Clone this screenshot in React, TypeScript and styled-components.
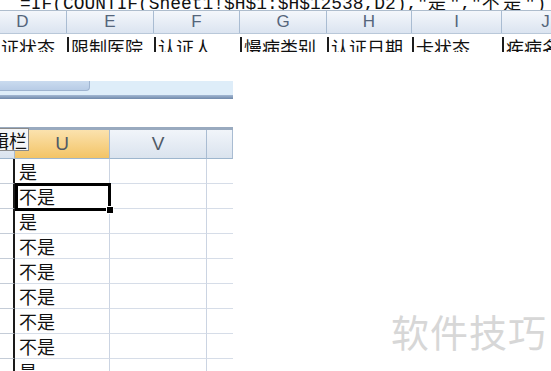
import React from "react";
import styled, { createGlobalStyle } from "styled-components";

const GlobalStyle = createGlobalStyle`
  html, body {
    margin: 0;
    padding: 0;
    background: #fff;
  }

  body {
    font-family: "Noto Sans CJK SC", "Liberation Sans", sans-serif;
  }
`;

// Top sheet: column widths from D to J (D starts off-screen)
const topColumns = [
  { letter: "D", label: "认证状态", width: 88 },
  { letter: "E", label: "限制医院", width: 87 },
  { letter: "F", label: "认证人", width: 86 },
  { letter: "G", label: "慢病类别", width: 87 },
  { letter: "H", label: "认证日期", width: 85 },
  { letter: "I", label: "卡状态", width: 90 },
  { letter: "J", label: "疾病名称", width: 88 },
];

const rows = ["是", "不是", "是", "不是", "不是", "不是", "不是", "不是", "是"];

const Page = styled.div`
  position: relative;
  width: 551px;
  height: 371px;
  overflow: hidden;
  background: #fff;
  display: flex;
  flex-direction: column;

  & > * {
    flex-shrink: 0;
  }
`;

const FormulaBar = styled.div`
  height: 10px;
  overflow: hidden;
  border-bottom: 1px solid #aebdcd;
`;

const FormulaText = styled.div`
  margin-top: -9px;
  padding-left: 20px;
  font-family: "Liberation Mono", "Noto Sans CJK SC", monospace;
  font-size: 17.9px;
  line-height: 20px;
  white-space: nowrap;
  color: #111;
`;

const Wide = styled.span`
  font-family: "Noto Sans CJK SC", sans-serif;
  letter-spacing: 3.6px;
`;

const HeaderStrip = styled.div`
  display: flex;
  height: 22px;
  margin-left: -21px;
  background: linear-gradient(#f4f7fb, #dbe4f0);
  border-bottom: 1px solid #b9c8d9;
`;

const HeaderCell = styled.div<{ $w: number }>`
  flex: 0 0 ${(p) => p.$w}px;
  box-sizing: border-box;
  border-right: 1px solid #a9bcd2;
  display: flex;
  align-items: center;
  justify-content: center;
  font-family: "Liberation Sans", Arial, sans-serif;
  font-size: 17px;
  color: #55657b;
`;

const LabelRow = styled.div`
  display: flex;
  margin-left: -21px;
  margin-top: 3px;
  height: 15px;
  overflow: hidden;
`;

const LabelCell = styled.div<{ $w: number }>`
  flex: 0 0 ${(p) => p.$w}px;
  box-sizing: border-box;
  border-left: 2px solid #1d1d1d;
  padding-left: 2px;
  font-size: 18px;
  line-height: 20px;
  white-space: nowrap;
  overflow: hidden;
  color: #111;
`;

const ScrollStrip = styled.div`
  width: 233px;
  height: 14px;
  margin-top: 29px;
  background: #deedf9;
`;

const ScrollThumb = styled.div`
  width: 90px;
  height: 10px;
  box-sizing: border-box;
  background: linear-gradient(#cadbef, #b8cce6);
  border-right: 1px solid #9fb4d0;
  border-bottom: 1px solid #9fb4d0;
  border-bottom-right-radius: 4px;
`;

const StripEdge = styled.div`
  width: 233px;
  height: 4px;
  background: linear-gradient(#a3b8d3, #6f88aa);
`;

const Sheet = styled.div`
  position: relative;
  width: 233px;
  margin-top: 28px;
  border-top: 3px solid #99aabf;
`;

const SheetGrid = styled.div`
  display: grid;
  grid-template-columns: 15px 95px 97px 26px;
  grid-template-rows: 29px;
  grid-auto-rows: 25px;
`;

const ColHead = styled.div<{ $active?: boolean }>`
  box-sizing: border-box;
  border-right: 1px solid #a9bcd2;
  border-bottom: 1px solid #9eb6ce;
  background: ${(p) =>
    p.$active
      ? "linear-gradient(#fbe2ae, #f3c466)"
      : "linear-gradient(#f1f5fa, #dae3ee)"};
  display: flex;
  align-items: center;
  justify-content: center;
  font-family: "Liberation Sans", Arial, sans-serif;
  font-size: 19px;
  color: #505a66;
`;

const RowHead = styled.div`
  box-sizing: border-box;
  border-right: 2px solid #1a1a1a;
  border-bottom: 1px solid #c4ccd7;
`;

const Cell = styled.div<{ $last?: boolean }>`
  position: relative;
  box-sizing: border-box;
  padding-left: 4px;
  border-bottom: 1px solid #d6dde8;
  border-right: ${(p) => (p.$last ? "none" : "1px solid #cbd4e2")};
  font-size: 18px;
  line-height: 24px;
  color: #111;
  white-space: nowrap;
`;

const Selection = styled.div`
  position: absolute;
  top: -1px;
  left: 0;
  right: -2px;
  bottom: -3px;
  border: 3px solid #000;
  z-index: 2;
`;

const FillHandle = styled.div`
  position: absolute;
  right: -6px;
  bottom: -6px;
  width: 6px;
  height: 6px;
  background: #000;
  border: 1px solid #fff;
`;

const Tooltip = styled.div`
  position: absolute;
  left: 0;
  top: -2px;
  width: 29px;
  height: 23px;
  box-sizing: border-box;
  background: #f5f6f8;
  border: 1px solid #8b8b8b;
  border-left: none;
  display: flex;
  justify-content: flex-end;
  align-items: center;
  overflow: hidden;
  padding-right: 1px;
  font-size: 18px;
  white-space: nowrap;
  color: #111;
  z-index: 3;
`;

const Watermark = styled.div`
  position: absolute;
  left: 391px;
  top: 303px;
  font-size: 38px;
  letter-spacing: 1px;
  color: #d7d7d7;
`;

const App: React.FC = () => {
  return (
    <>
      <GlobalStyle />
      <Page>
        <FormulaBar>
          <FormulaText>
            =IF(COUNTIF(Sheet1!$H$1:$H$12538,D2),"<Wide>是</Wide>","<Wide>不是</Wide>")
          </FormulaText>
        </FormulaBar>

        <HeaderStrip>
          {topColumns.map((c) => (
            <HeaderCell key={c.letter} $w={c.width}>
              {c.letter}
            </HeaderCell>
          ))}
        </HeaderStrip>

        <LabelRow>
          {topColumns.map((c) => (
            <LabelCell key={c.letter} $w={c.width}>
              {c.label}
            </LabelCell>
          ))}
        </LabelRow>

        <ScrollStrip>
          <ScrollThumb />
        </ScrollStrip>
        <StripEdge />

        <Sheet>
          <Tooltip>编辑栏</Tooltip>
          <SheetGrid>
            <ColHead />
            <ColHead $active>U</ColHead>
            <ColHead>V</ColHead>
            <ColHead />
            {rows.map((v, i) => (
              <React.Fragment key={i}>
                <RowHead />
                <Cell>
                  {v}
                  {i === 1 && (
                    <Selection>
                      <FillHandle />
                    </Selection>
                  )}
                </Cell>
                <Cell />
                <Cell $last />
              </React.Fragment>
            ))}
          </SheetGrid>
        </Sheet>

        <Watermark>软件技巧</Watermark>
      </Page>
    </>
  );
};

export default App;
